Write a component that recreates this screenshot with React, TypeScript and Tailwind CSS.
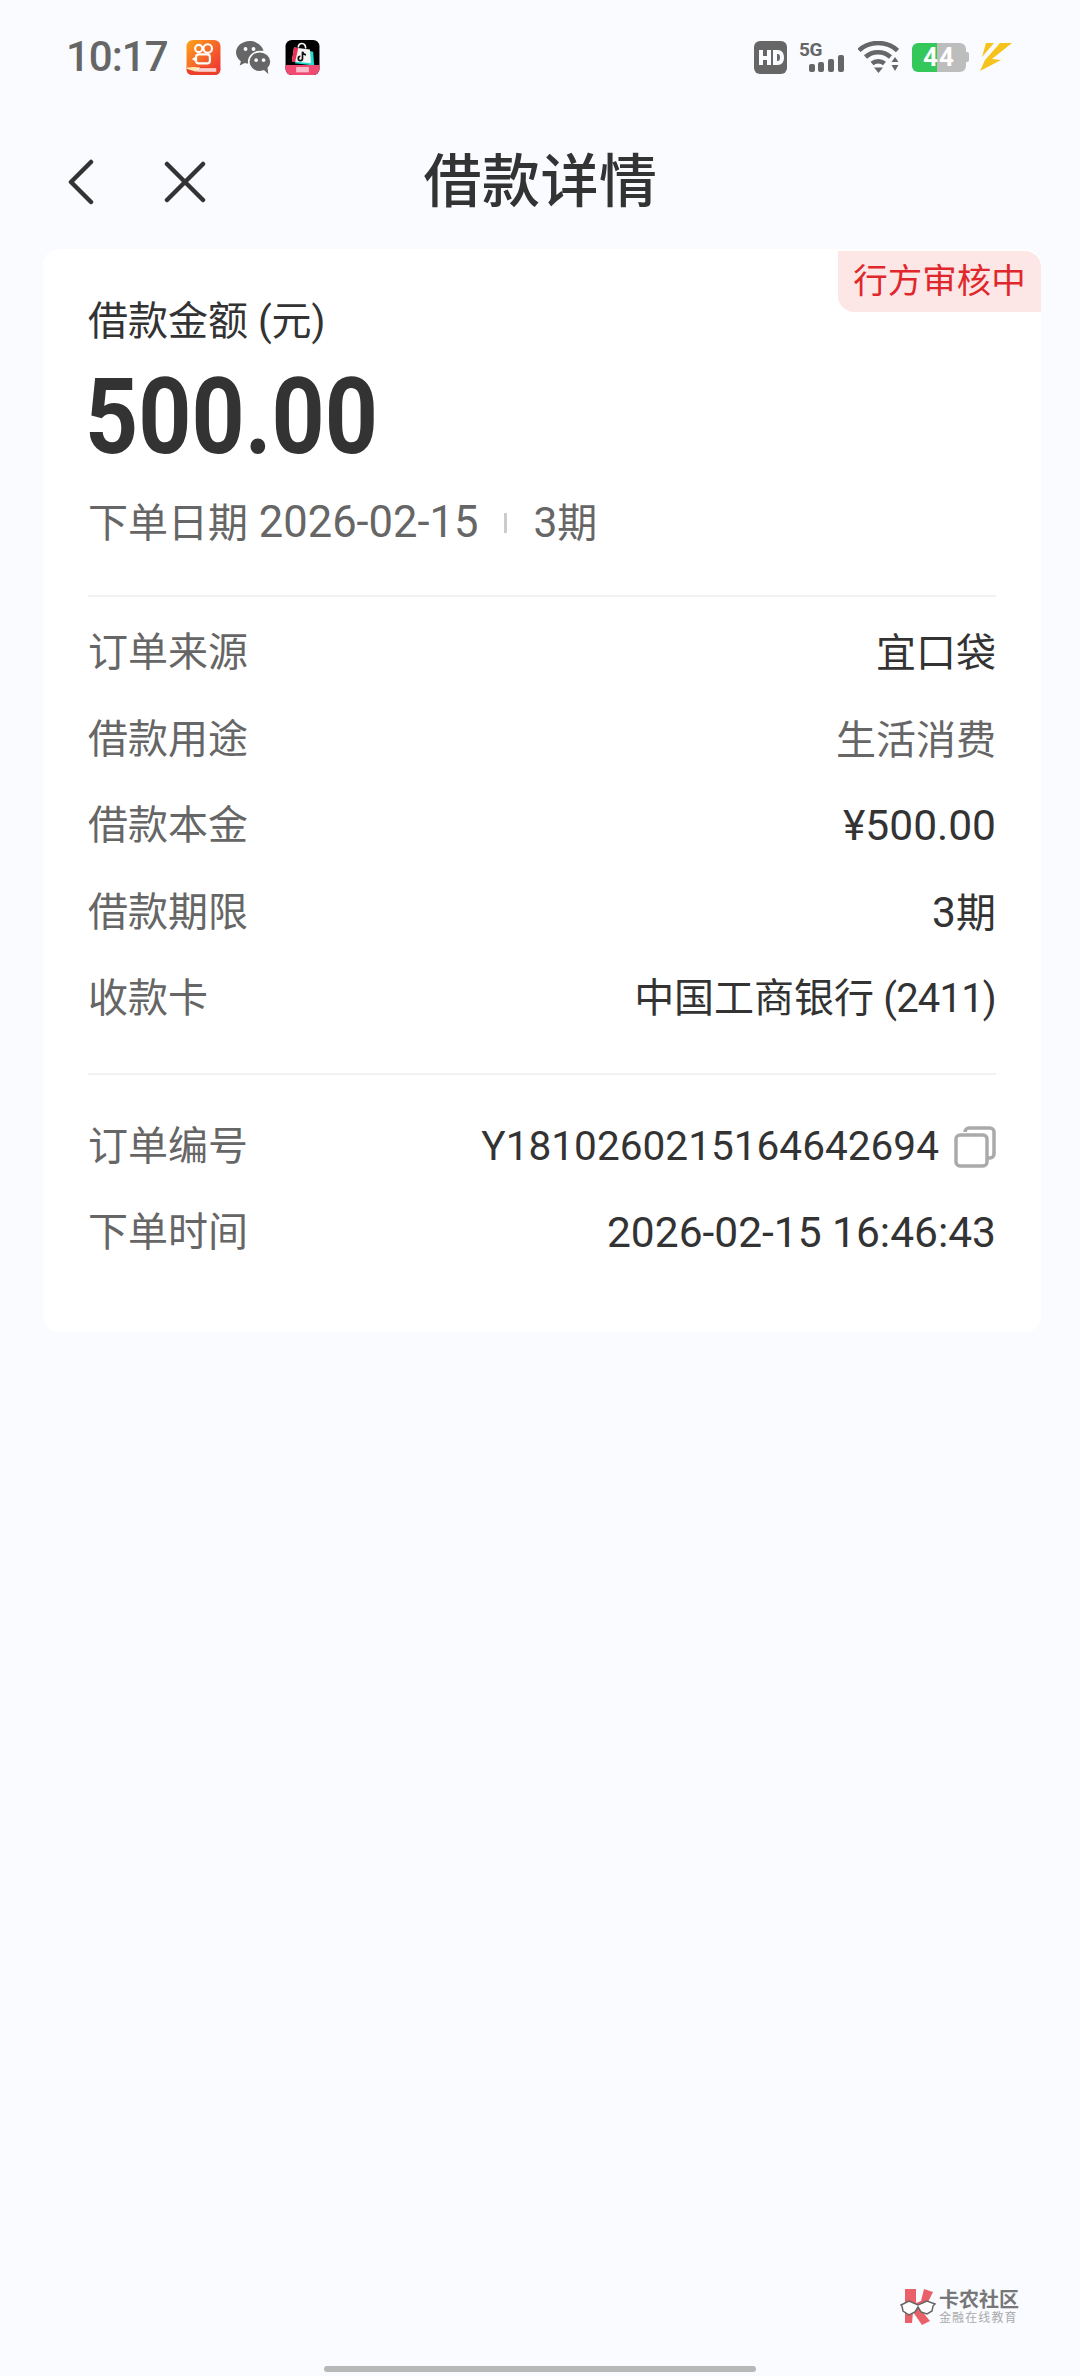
const sans = "font-['Roboto','Noto_Sans_CJK_SC',sans-serif]";

// digits in this UI run larger than the CJK text beside them
function MixedText({ text, numClass = "text-[42.5px]" }: { text: string; numClass?: string }) {
  return (
    <>
      {text.split(/([\u4e00-\u9fff]+)/).map((part, i) =>
        i % 2 === 1 ? (
          <span key={i}>{part}</span>
        ) : (
          <span key={i} className={numClass}>
            {part}
          </span>
        ),
      )}
    </>
  );
}

function KuaishouIcon() {
  return (
    <svg width="35" height="35" viewBox="0 0 32 33">
      <defs>
        <linearGradient id="ks" x1="0" y1="0" x2="1" y2="1">
          <stop offset="0" stopColor="#fda31c" />
          <stop offset="1" stopColor="#ee2a35" />
        </linearGradient>
      </defs>
      <rect width="32" height="33" rx="6" fill="url(#ks)" />
      <path d="M0 26 Q14 24 32 27 V27 Q32 33 26 33 H6 Q0 33 0 27Z" fill="#ec3f2c" />
      <path d="M0 26 Q8 25 13 26 L9 30 Q3 28 0 27Z" fill="#ffe9b0" />
      <circle cx="11.500" cy="8" r="3.400" fill="none" stroke="#fff" strokeWidth="2" />
      <circle cx="20" cy="8" r="4" fill="none" stroke="#fff" strokeWidth="2" />
      <rect x="9" y="13.500" width="13" height="8.500" rx="2.500" fill="none" stroke="#fff" strokeWidth="2" />
      <path d="M8 16 L5 18 L8 20Z" fill="#fff" />
      <rect x="10" y="26.500" width="18" height="3.500" fill="#fff" opacity=".75" />
    </svg>
  );
}

function WechatIcon() {
  return (
    <svg width="35" height="35" viewBox="0 0 33 33">
      <path d="M13 1C6 1 0 5.800 0 11.800c0 3.300 1.800 6.200 4.600 8.200L3.500 24l4.700-2.400c1.400.4 2.800.6 4.300.6 1 0 1.500-.1 1.500-.1C13 15 18 10 26 10.200 24.500 5 19.200 1 13 1z" fill="#666" />
      <ellipse cx="22.500" cy="20.500" rx="10.500" ry="9.500" fill="#666" stroke="#f9fbff" strokeWidth="1.500" />
      <path d="M26 28l4.500 4-.8-6z" fill="#666" />
      <circle cx="9" cy="8.500" r="1.800" fill="#f9fbff" />
      <circle cx="16.500" cy="8.500" r="1.800" fill="#f9fbff" />
      <circle cx="19" cy="19" r="1.700" fill="#f9fbff" />
      <circle cx="26" cy="19" r="1.700" fill="#f9fbff" />
    </svg>
  );
}

function DouyinMallIcon() {
  return (
    <svg width="35" height="35" viewBox="0 0 32 33">
      <rect width="32" height="33" rx="6" fill="#000" />
      <path d="M9 7l15 3 1 13-18-2z" fill="#25dcd0" transform="translate(2 1)" />
      <path d="M8 7l15 2 1 13-18-2z" fill="#f5f5f5" />
      <path d="M6 20l2-13 4 .5L9 21z" fill="#ef2d55" />
      <path d="M12 7c0-5 7-5 7 1" fill="none" stroke="#fff" strokeWidth="1.500" />
      <path d="M16 11v6.500a2 2 0 1 1-2-2M16 11c.5 2 1.800 2.800 3.300 3" fill="none" stroke="#111" strokeWidth="1.600" />
      <path d="M0 23.500h32V27a6 6 0 0 1-6 6H6a6 6 0 0 1-6-6z" fill="#f04a72" />
      <rect x="10" y="25.500" width="12" height="5" fill="#ffd7e0" opacity=".8" />
    </svg>
  );
}

function StatusRightIcons() {
  return (
    <div className="flex items-center">
      <svg width="33" height="33" viewBox="0 0 33 33">
        <rect width="33" height="33" rx="6" fill="#666" />
        <path d="M5 9h4v6h4V9h4v15h-4v-5H9v5H5zM19 9h4.500c4.500 0 6.500 3 6.500 7.500S28 24 23.500 24H19zM23 13v7h.8c1.600 0 2.200-1.400 2.200-3.500S25.400 13 23.800 13z" fill="#f9fbff" />
      </svg>
      <div className="relative ml-[12px] h-[32px] w-[46px]">
        <span className="absolute left-0 top-0 text-[19px] leading-[17px] font-bold tracking-[-0.5px] text-[#666] font-['Roboto',sans-serif]">
          5G
        </span>
        <svg width="46" height="32" viewBox="0 0 46 32">
          <rect x="10" y="23" width="6" height="8" rx="2" fill="#666" />
          <rect x="19" y="21" width="6" height="10" rx="2" fill="#666" />
          <rect x="29" y="18" width="6" height="13" rx="2" fill="#666" />
          <rect x="39" y="14" width="6" height="17" rx="2" fill="#666" />
        </svg>
      </div>
      <svg className="ml-[13px]" width="41" height="33" viewBox="0 0 41 33">
        <path d="M1 9.500C11-.5 29-.5 39.500 9.500" fill="none" stroke="#666" strokeWidth="4.500" />
        <path d="M7.500 16c7-6.500 18-6.500 25 0" fill="none" stroke="#666" strokeWidth="4.500" />
        <path d="M14 22.500c3.500-3 9-3 12.500 0" fill="none" stroke="#666" strokeWidth="4.500" />
        <path d="M16 26.500h9L20.500 32z" fill="#666" />
        <path d="M32 21h7l-3.500-5zM32 24h7l-3.500 6z" fill="#666" transform="translate(1.500 0)" />
      </svg>
      <div className="relative ml-[13px] flex h-[29px] w-[58px] items-center">
        <div className="h-[29px] w-[25px] rounded-l-[6px] bg-[#34c759]" />
        <div className="h-[29px] w-[29px] rounded-r-[6px] bg-[#bdbdbd]" />
        <div className="h-[10px] w-[3px] rounded-r-[2px] bg-[#bdbdbd]" />
        <span className="absolute inset-y-0 left-[11px] flex items-center text-[26px] leading-none font-bold tracking-[1px] text-white font-['Roboto',sans-serif]">
          44
        </span>
      </div>
      <svg className="ml-[10px]" width="33" height="28" viewBox="0 0 33 28">
        <path d="M6 0h8L2 14zM20 0h12L12 16l9 1L0 28l5-11z" fill="#f6c21c" />
      </svg>
    </div>
  );
}

function StatusBar() {
  return (
    <div className="flex h-[114px] items-center justify-between pl-[66px] pr-[67px]">
      <div className="flex items-center">
        <span className="mr-[19px] w-[101px] text-[42px] leading-none font-medium tracking-[-1px] text-[#666] font-['Roboto',sans-serif]">
          10:17
        </span>
        <KuaishouIcon />
        <div className="ml-[15px]">
          <WechatIcon />
        </div>
        <div className="ml-[14px]">
          <DouyinMallIcon />
        </div>
      </div>
      <StatusRightIcons />
    </div>
  );
}

function NavBar() {
  return (
    <div className="grid h-[135px] grid-cols-[1fr_auto_1fr] items-center px-[68px]">
      <div className="flex items-center">
        <svg width="26" height="46" viewBox="0 0 26 46" className="shrink-0">
          <path d="M23 3L3 23l20 20" fill="none" stroke="#333" strokeWidth="4.500" strokeLinecap="round" strokeLinejoin="round" />
        </svg>
        <svg width="42" height="42" viewBox="0 0 42 42" className="ml-[70px] shrink-0">
          <path d="M3 3l36 36M39 3L3 39" fill="none" stroke="#333" strokeWidth="4.500" strokeLinecap="round" />
        </svg>
      </div>
      <h1 className={`ml-[1px] text-[58px] leading-none font-medium tracking-[0.5px] text-[#333] ${sans}`}>借款详情</h1>
      <div />
    </div>
  );
}

type Row = { label: string; value: string; muted?: boolean; copy?: boolean; numClass?: string };

const loanRows: Row[] = [
  { label: "订单来源", value: "宜口袋" },
  { label: "借款用途", value: "生活消费", muted: true },
  { label: "借款本金", value: "¥500.00" },
  { label: "借款期限", value: "3期" },
  { label: "收款卡", value: "中国工商银行 (2411)", numClass: "text-[40px] tracking-[-0.8px]" },
];

const orderRows: Row[] = [
  { label: "订单编号", value: "Y1810260215164642694", copy: true, numClass: "text-[40.6px]" },
  { label: "下单时间", value: "2026-02-15 16:46:43" },
];

function CopyIcon() {
  return (
    <svg width="42" height="42" viewBox="0 0 42 42" className="ml-[15px] shrink-0">
      <path d="M11 6a4 4 0 0 1 4-4h21a4 4 0 0 1 4 4v22a4 4 0 0 1-4 4h-3" fill="none" stroke="#aaa" strokeWidth="3.500" />
      <rect x="2" y="9" width="31" height="31" rx="4" fill="none" stroke="#aaa" strokeWidth="3.500" />
    </svg>
  );
}

function DetailRow({ label, value, muted, copy, numClass }: Row) {
  return (
    <div className="flex h-[86.500px] items-center justify-between text-[40px] leading-none">
      <span className="text-[#666]">{label}</span>
      <span className={`flex items-center ${muted ? "text-[#666]" : "text-[#333]"}`}>
        <span>
          <MixedText text={value} numClass={numClass} />
        </span>
        {copy && <CopyIcon />}
      </span>
    </div>
  );
}

function LoanCard() {
  return (
    <div className={`relative ml-[43px] h-[1083px] w-[998px] rounded-[16px] bg-white pl-[45px] pr-[45px] ${sans}`}>
      <span className="absolute right-0 top-[2px] flex h-[61px] w-[203px] items-center justify-center rounded-tr-[16px] rounded-bl-[16px] bg-[#fde6e6] text-[34.500px] leading-none text-[#e0282c]">
        行方审核中
      </span>
      <p className="pt-[51px] text-[40px] leading-[44px] text-[#333]">借款金额 (元)</p>
      <p className="-ml-[3px] mt-[21px] h-[105px] origin-left scale-x-[0.875] text-[106px] leading-[105px] font-bold text-[#333]">
        500.00
      </p>
      <div className="mt-[31px] flex h-[44px] items-center text-[40px] leading-none text-[#666]">
        <span>
          <MixedText text="下单日期 2026-02-15" numClass="text-[43.5px]" />
        </span>
        <span className="mx-[26px] h-[20px] w-[3px] bg-[#ccc]" />
        <span>
          <MixedText text="3期" />
        </span>
      </div>
      <div className="mt-[50px] h-[2px] bg-[#f2f2f2]" />
      <div className="pt-[13px]">
        {loanRows.map((row) => (
          <DetailRow key={row.label} {...row} />
        ))}
      </div>
      <div className="mt-[30px] h-[2px] bg-[#f2f2f2]" />
      <div className="pt-[29px]">
        {orderRows.map((row) => (
          <DetailRow key={row.label} {...row} />
        ))}
      </div>
    </div>
  );
}

function Watermark() {
  return (
    <div className={`absolute left-[900px] top-[2288px] flex items-center ${sans}`}>
      <svg width="36" height="37" viewBox="0 0 36 37">
        <path d="M5 1h11v14l5-2 3-12 9 3-6 12 4 2-1 4-9 0 9 11-8 4-9-13-1 11H5z" fill="#ea6069" />
        <path d="M1 17l8-4 9 4 9-4 8 3-2 2-1 5-5 3-6-2-3-5-3 5-6 3-6-4-1-5z" fill="#fff" stroke="#666" strokeWidth="1.500" />
      </svg>
      <div className="ml-[3px] flex flex-col">
        <span className="text-[20px] leading-[22px] font-bold text-[#777]">卡农社区</span>
        <span className="text-[12px] leading-[14px] tracking-[1.100px] text-[#aaa]">金融在线教育</span>
      </div>
    </div>
  );
}

export default function App() {
  return (
    <div className="relative flex h-[2376px] w-[1080px] flex-col overflow-hidden bg-[#f9fbff]">
      <StatusBar />
      <NavBar />
      <LoanCard />
      <Watermark />
      <div className="mx-auto mb-[4px] mt-auto h-[6px] w-[432px] rounded-full bg-[#b7b7b7]" />
    </div>
  );
}
